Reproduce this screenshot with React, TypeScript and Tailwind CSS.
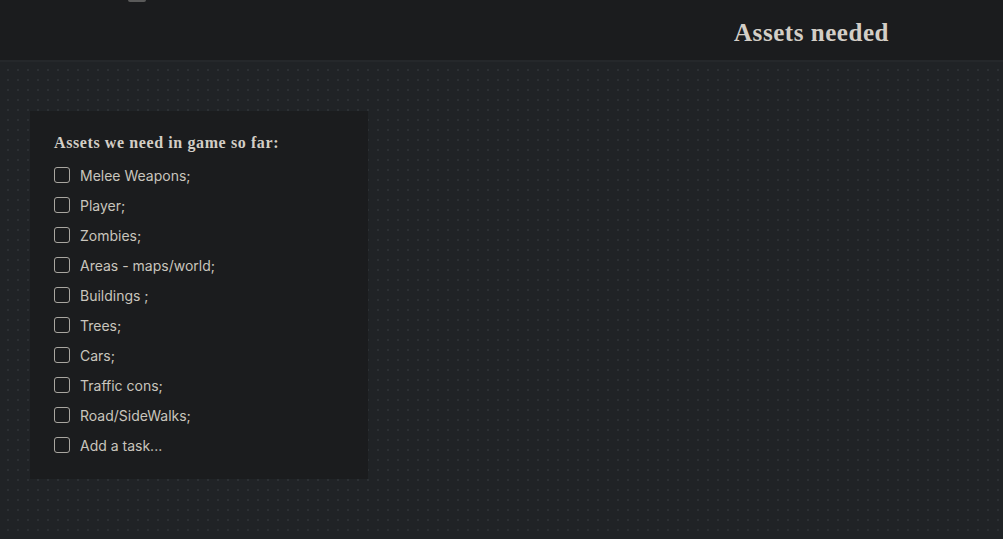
const tasks = [
   "Melee Weapons;",
   "Player;",
   "Zombies;",
   "Areas - maps/world;",
   "Buildings ;",
   "Trees;",
   "Cars;",
   "Traffic cons;",
   "Road/SideWalks;",
];

function Checkbox() {
   return (
      <span className="block w-4 h-4 rounded-[3px] border border-[#a9a6a0] shrink-0"></span>
   );
}

export default function App() {
   return (
      <div className="w-[1003px] h-[539px] overflow-hidden flex flex-col bg-[#202326] font-['Inter',sans-serif]">
         <header className="h-[62px] shrink-0 bg-[#1b1c1e] border-b-2 border-[#25282b] flex relative">
            <div className="absolute left-[128px] top-0 w-[18px] h-[2px] rounded-b bg-[#5a5a5a]"></div>
            <div className="ml-auto w-[536px] pl-[267px] pt-[6px] flex items-center">
               <h1 className="font-['Liberation_Serif',serif] font-bold text-[25px] text-[#d3cec6] tracking-[0.55px]">
                  Assets needed
               </h1>
            </div>
         </header>
         <main className="flex-1 bg-[radial-gradient(circle,#2c3034_1px,transparent_1.2px)] bg-[size:10px_10px] bg-[position:3px_3px] pt-[49px] pl-[30px]">
            <section className="w-[338px] h-[368px] bg-[#1b1c1e] pt-[22px] px-6">
               <h2 className="font-['Liberation_Serif',serif] font-bold text-[16px] text-[#d3cec6] leading-5 tracking-[0.6px]">
                  Assets we need in game so far:
               </h2>
               <ul className="mt-[7px]">
                  {tasks.map((t) => (
                     <li key={t} className="h-[30px] flex items-center gap-[10px] text-[14px] text-[#c9c5bd]">
                        <Checkbox />
                        <span>{t}</span>
                     </li>
                  ))}
                  <li className="h-[30px] flex items-center gap-[10px] text-[14px] text-[#c9c5bd]">
                     <Checkbox />
                     <span>Add a task...</span>
                  </li>
               </ul>
            </section>
         </main>
      </div>
   );
}
